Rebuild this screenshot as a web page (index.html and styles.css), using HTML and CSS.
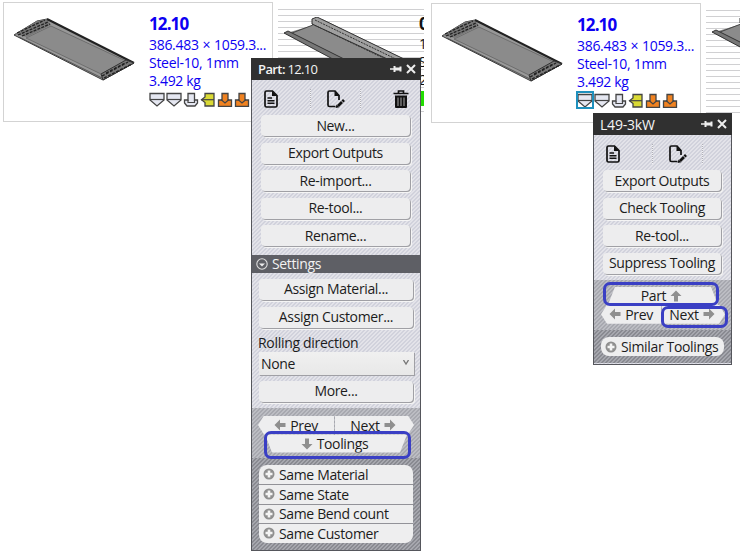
FILE: index.html
```html
<!DOCTYPE html>
<html lang="en">
<head>
<meta charset="utf-8">
<title>Parts</title>
<link rel="stylesheet" href="styles.css">
</head>
<body>
<svg class="defs" width="0" height="0">
  <defs>
    <symbol id="sheet" viewBox="0 0 130 72">
      <path d="M4 23 27 9 37 7 124 51 93 68Z" fill="#999" stroke="#3c3c3c" stroke-width="1"/>
      <path d="M16 26 41 14 116 49 91 62Z" fill="#8b8b8b" stroke="#555" stroke-width=".6"/>
      <path d="M5 22 27 9 37 7 41 13 17 25Z" fill="#777"/>
      <path d="M7 21 35 8M8 23 38 10M12 24 40 12" fill="none" stroke="#222" stroke-width="1.300" stroke-dasharray="3 1.200"/>
      <path d="M37 7 124 51" stroke="#222" stroke-width="2"/>
      <path d="M9 25 92 66" stroke="#444" stroke-width=".8"/>
      <path d="M91 62 116 48 124 51 93 68Z" fill="#777" stroke="#333"/>
      <path d="M92 64 118 50M94 66 122 52M96 61 115 51" stroke="#202020" stroke-width="1.300" stroke-dasharray="3 1.500"/>
    </symbol>
    <symbol id="channel" viewBox="0 0 130 50">
      <path d="M0 16 6 15 30 8 38 2 122 43 130 50 65 50Z" fill="#8b8b8b"/>
      <path d="M28 2 33 0 120 42 112 46 28 7Z" fill="#a0a0a0" stroke="#333"/>
      <path d="M28 7 112 47M31 3 118 45" stroke="#333" stroke-dasharray="2 1" fill="none"/>
      <path d="M0 16 4 14 62 43 60 48Z" fill="#777" stroke="#333"/>
      <path d="M8 16 29 8" stroke="#444"/>
    </symbol>
    <symbol id="punch" viewBox="0 0 16 16">
      <path d="M1 2.500H15V9L8 15 1 9Z" fill="#e5e7f1" stroke="#444" stroke-width="1.300"/><path d="M1 8.500H15" stroke="#444" stroke-width="1.200"/>
    </symbol>
    <symbol id="flange" viewBox="0 0 16 16">
      <path d="M1.500 9H5V2.500H11.500V9H14.500V12L12 15H4L1.500 12Z" fill="#e5e7f1" stroke="#444" stroke-width="1.300"/><path d="M5 9V11.500H11.500V9" fill="none" stroke="#444" stroke-width="1.200"/>
    </symbol>
    <symbol id="side" viewBox="0 0 16 16">
      <path d="M14 2.500V15H5V11.500L1.500 8.700 5 6V2.500Z" fill="#dada35" stroke="#444" stroke-width="1.300"/><path d="M1 8.700H14" stroke="#444" stroke-width="1.200"/>
    </symbol>
    <symbol id="die" viewBox="0 0 16 16">
      <path d="M1.500 9H5V2.500H11V9H14.500V15.300H1.500Z" fill="#f08220" stroke="#444" stroke-width="1.300"/><path d="M4 8.500 8 12 12 8.500" fill="none" stroke="#444" stroke-width="1.200"/>
    </symbol>
    <symbol id="pin" viewBox="0 0 12 10"><path d="M0 5H4" stroke="#eee" stroke-width="1.500"/><path d="M3.500 2H5.500V3.500H9.500V2.500H11.500V7.500H9.500V6.500H5.500V8H3.500Z" fill="#eee"/></symbol>
    <symbol id="close" viewBox="0 0 10 10"><path d="M1 1 9 9M9 1 1 9" stroke="#eee" stroke-width="2"/></symbol>
    <symbol id="doc" viewBox="0 0 16 18"><path d="M3.500 1H9.500L14 5.500V15.500Q14 17 12.500 17H3.500Q2 17 2 15.500V2.500Q2 1 3.500 1Z" fill="none" stroke="#111" stroke-width="1.700"/><path d="M9 1V6H14Z" fill="#111"/><path d="M4.500 8H9M4.500 10.700H11.500M4.500 13.300H11.500" stroke="#111" stroke-width="1.400"/></symbol>
    <symbol id="edit" viewBox="0 0 18 18"><path d="M8.500 16.500H2.500Q1 16.500 1 15V2.500Q1 1 2.500 1H8L12 5.500V10" fill="none" stroke="#111" stroke-width="1.700"/><path d="M7.500 1V6H12.500Z" fill="#111"/><path d="M11 16 15 12M15.500 11.500 17 10" stroke="#111" stroke-width="2.800"/><path d="M9.500 14.500 8.700 18 12.300 17.200Z" fill="#111"/></symbol>
    <symbol id="trash" viewBox="0 0 16 18"><path d="M.5 3.500H15.500M5.500 3V1H10.500V3" fill="none" stroke="#111" stroke-width="1.700"/><path d="M2 5.500H14V17Q14 18 13 18H3Q2 18 2 17Z" fill="#111"/><path d="M5 7.500V16M8 7.500V16M11 7.500V16" stroke="#aaa"/></symbol>
    <symbol id="arrow" viewBox="0 0 12 12"><path d="M6 .5V4H11.500V8H6V11.500L.5 6Z" fill="#8f8f8f"/></symbol>
    <symbol id="plus" viewBox="0 0 12 12"><circle cx="6" cy="6" r="5.500" fill="#8f8f8f"/><path d="M6 2.500V9.500M2.500 6H9.500" stroke="#f4f4f4" stroke-width="2.600"/></symbol>
    <symbol id="fold" viewBox="0 0 12 12"><circle cx="6" cy="6" r="5.200" fill="none" stroke="#ddd" stroke-width="1.100"/><path d="M3 5.500H9L6 8.500Z" fill="#eee"/></symbol>
  </defs>
</svg>
<main class="board">
  <section class="card">
    <svg class="thumb"><use href="#sheet"/></svg>
    <div class="info">
      <h2>12.10</h2><p class="size">386.483 × 1059.3...</p><p class="mat">Steel-10, 1mm</p><p>3.492 kg</p>
      <div class="tools"><svg><use href="#punch"/></svg><svg><use href="#punch"/></svg><svg><use href="#flange"/></svg><svg><use href="#side"/></svg><svg><use href="#die"/></svg><svg><use href="#die"/></svg></div>
    </div>
  </section>
  <section class="striped">
    <svg class="thumb2"><use href="#channel"/></svg>
    <div class="cut"><b>0</b><span>1</span><span>S</span><span>2</span><i></i></div>
  </section>
  <section class="card second">
    <svg class="thumb"><use href="#sheet"/></svg>
    <div class="info">
      <h2>12.10</h2><p class="size">386.483 × 1059.3...</p><p class="mat">Steel-10, 1mm</p><p>3.492 kg</p>
      <div class="tools"><svg class="on"><use href="#punch"/></svg><svg><use href="#punch"/></svg><svg><use href="#flange"/></svg><svg><use href="#side"/></svg><svg><use href="#die"/></svg><svg><use href="#die"/></svg></div>
    </div>
  </section>
  <section class="striped last">
    <svg class="thumb2"><use href="#channel"/></svg>
  </section>

  <aside class="panel part">
    <header><span class="title"><span class="strong">Part:</span> 12.10</span><svg class="pin"><use href="#pin"/></svg><svg class="close"><use href="#close"/></svg></header>
    <div class="icons"><svg class="i16"><use href="#doc"/></svg><i class="sep"></i><svg class="i18"><use href="#edit"/></svg><i class="sep"></i><svg class="i16"><use href="#trash"/></svg></div>
    <div class="buttons"><button>New...</button><button>Export Outputs</button><button>Re-import...</button><button>Re-tool...</button><button>Rename...</button></div>
    <div class="group"><svg><use href="#fold"/></svg><span>Settings</span></div>
    <div class="buttons wide"><button>Assign Material...</button><button>Assign Customer...</button></div>
    <div class="label">Rolling direction</div>
    <div class="select"><span>None</span><svg viewBox="0 0 6 6"><path d="M.5 0 3 4 5.500 0" fill="none" stroke="#777" stroke-width="1.300"/></svg></div>
    <div class="buttons wide"><button>More...</button></div>
    <div class="nav">
      <div class="pair"><div><svg><use href="#arrow"/></svg><span>Prev</span></div><div><span>Next</span><svg class="right"><use href="#arrow"/></svg></div></div>
      <div class="trap down"><svg class="south"><use href="#arrow"/></svg><span>Toolings</span></div>
      <div class="mark"></div>
    </div>
    <div class="same"><div class="list"><div><svg><use href="#plus"/></svg><span>Same Material</span></div><div><svg><use href="#plus"/></svg><span>Same State</span></div><div><svg><use href="#plus"/></svg><span>Same Bend count</span></div><div><svg><use href="#plus"/></svg><span>Same Customer</span></div></div></div>
  </aside>

  <aside class="panel tooling">
    <header><span class="title name">L49-3kW</span><svg class="pin"><use href="#pin"/></svg><svg class="close"><use href="#close"/></svg></header>
    <div class="icons"><svg class="i16"><use href="#doc"/></svg><i class="sep"></i><svg class="i18"><use href="#edit"/></svg><i class="sep"></i></div>
    <div class="buttons"><button>Export Outputs</button><button>Check Tooling</button><button>Re-tool...</button><button>Suppress Tooling</button></div>
    <div class="nav">
      <div class="trap up"><span>Part</span><svg class="north"><use href="#arrow"/></svg></div>
      <div class="pair"><div><svg><use href="#arrow"/></svg><span>Prev</span></div><div><span>Next</span><svg class="right"><use href="#arrow"/></svg></div></div>
      <div class="mark"></div><div class="mark small"></div>
    </div>
    <div class="same"><div class="list"><div><svg><use href="#plus"/></svg><span>Similar Toolings</span></div></div></div>
  </aside>
</main>
</body>
</html>
```
FILE: styles.css
```css
* { box-sizing: border-box; }
body { margin: 0; background: #fff; font-family: "Open Sans", "Noto Sans", sans-serif; font-size: 14px; letter-spacing: -.35px; color: #1c1c1c; }
.defs { position: absolute; }
svg { display: block; flex: none; }
.board { position: relative; width: 740px; height: 553px; overflow: hidden; display: flex; align-items: flex-start; }
.card { flex: none; width: 270px; height: 120px; margin: 2px 0 0 3px; border: 1px solid #d3d3d3; background: #fff; display: flex; padding: 9px 0 0 6px; color: #0d00f2; }
.second { margin: 3px 0 0 7px; }
.thumb { width: 130px; height: 72px; }
.info { padding-left: 9px; white-space: nowrap; }
h2 { margin: 0; font-size: 17px; line-height: 24px; letter-spacing: -.9px; font-weight: 700; }
p { margin: 0; line-height: 18px; }
.size { letter-spacing: -.3px; word-spacing: .5px; }
.mat { letter-spacing: -.3px; }
.tools { display: flex; gap: 1px; margin-top: 1px; }
.tools svg { width: 16px; height: 16px; }
.tools .on { outline: 2px solid #1e90bd; outline-offset: -1px; }
.striped { flex: none; width: 146px; height: 112px; margin: 0 0 0 5px; display: flex; overflow: hidden; background: repeating-linear-gradient(#fff 0 5px, #d0d0d2 5px 6px) 0 4px no-repeat; padding: 17px 0 0 6px; }
.last { width: 34px; height: 113px; margin-left: 5px; background-position: 0 5px; padding-top: 16px; }
.thumb2 { width: 130px; height: 50px; }
.cut { width: 12px; margin: -5px 0 0 5px; display: flex; flex-direction: column; line-height: 18px; color: #111; }
.cut b { font-size: 17px; line-height: 23px; }
.cut i { width: 12px; height: 15px; margin-top: 2px; background: #2d0; }
.panel { position: absolute; border: 1px solid #55565c; border-top: 0; background: repeating-linear-gradient(135deg, #d1d2dc 0 1.414px, #e3e3e9 1.414px 2.828px); white-space: nowrap; }
.part { left: 251px; top: 58px; width: 170px; height: 493px; }
.tooling { left: 593px; top: 113px; width: 139px; height: 252px; }
header { height: 22px; margin: 0 -1px; padding: 0 5px 0 7px; background: #303030; color: #f4f4f4; display: flex; align-items: center; font-size: 13px; letter-spacing: -.7px; }
.title { flex: 1; }
.name { font-size: 14px; letter-spacing: -.2px; }
.strong { font-weight: 600; letter-spacing: -.6px; }
.pin { width: 12px; height: 10px; margin-right: 4px; }
.close { width: 10px; height: 10px; }
.icons { height: 35px; padding: 2px 11px 0 11px; display: flex; align-items: center; }
.i16 { width: 16px; height: 18px; }
.i18 { width: 18px; height: 18px; }
.sep { width: 1px; height: 20px; margin-left: 31px; background: repeating-linear-gradient(#b0b0b8 0 1px, #f2f2f4 1px 2px); }
.sep + .i18 { margin-left: 16px; }
.i18 + .sep { margin-left: 15px; }
.sep + .i16 { margin-left: auto; }
.buttons { padding: 0 10px 0 9px; display: flex; flex-direction: column; gap: 6.600px; }
button { height: 21px; padding: 0; border: 0; border-radius: 4px; background: #ededee; box-shadow: 1px 1px 0 #a0a0a5, 2px 2px 0 #f5f5f5; font: inherit; letter-spacing: inherit; color: inherit; line-height: 20px; }
.group { height: 18px; margin-top: 8.600px; background: #5e5f65; color: #f2f2f2; padding-left: 4px; display: flex; align-items: center; gap: 4px; }
.group svg { width: 12px; height: 12px; }
.wide { padding: 6px 7px 0; }
.label { height: 24px; padding-left: 6px; line-height: 29px; letter-spacing: -.3px; }
.select { height: 23px; margin: 0 6px 0 7px; padding: 0 5px 0 2px; background: linear-gradient(#f0f0f0, #e8e8e8); box-shadow: 1px 1px 0 #a0a0a5; display: flex; align-items: center; justify-content: space-between; }
.select svg { width: 6px; height: 6px; }
.nav { position: relative; margin-top: 6px; height: 50px; padding: 8px 6px 0 6px; background: repeating-linear-gradient(135deg, #a7a8af 0 1.414px, #bcbdc3 1.414px 2.828px); }
.nav svg, .list svg { width: 12px; height: 12px; }
.pair { height: 19px; display: flex; clip-path: polygon(6px 0, calc(100% - 6px) 0, 100% 50%, calc(100% - 6px) 100%, 6px 100%, 0 50%); gap: 1px; }
.pair > div, .trap { flex: 1; display: flex; align-items: center; justify-content: center; gap: 4px; background: #eeeeef; }
.pair > div + div { padding-right: 3px; }
.trap { height: 18px; margin: 0 7px; }
.down { clip-path: polygon(0 0, 100% 0, calc(100% - 7px) 100%, 7px 100%); padding-right: 3px; }
.up { clip-path: polygon(7px 0, calc(100% - 7px) 0, 100% 100%, 0 100%); padding-right: 3px; }
.right { transform: rotate(180deg); }
.north { transform: rotate(90deg); }
.south { transform: rotate(-90deg); }
.mark { position: absolute; left: 12px; top: 23px; width: 147px; height: 28px; border: 3px solid #3a3fc4; border-radius: 7px; }
.same { padding: 7px; background: repeating-linear-gradient(135deg, #898a91 0 1.414px, #a6a7ae 1.414px 2.828px); }
.list { border-radius: 8px; overflow: hidden; background: #eeeeef; }
.list > div { height: 19.500px; display: flex; align-items: center; gap: 4px; padding-left: 4px; }
.list > div + div { border-top: 1px solid #929298; }
.tooling .nav { margin-top: 6px; padding: 7px 6px 0 7px; }
.tooling .pair > div:first-child { flex: 0 0 60px; }
.tooling .mark { left: 9px; top: 2px; width: 116px; height: 24px; }
.tooling .small { left: 67px; top: 26px; width: 67px; height: 22px; }
```
